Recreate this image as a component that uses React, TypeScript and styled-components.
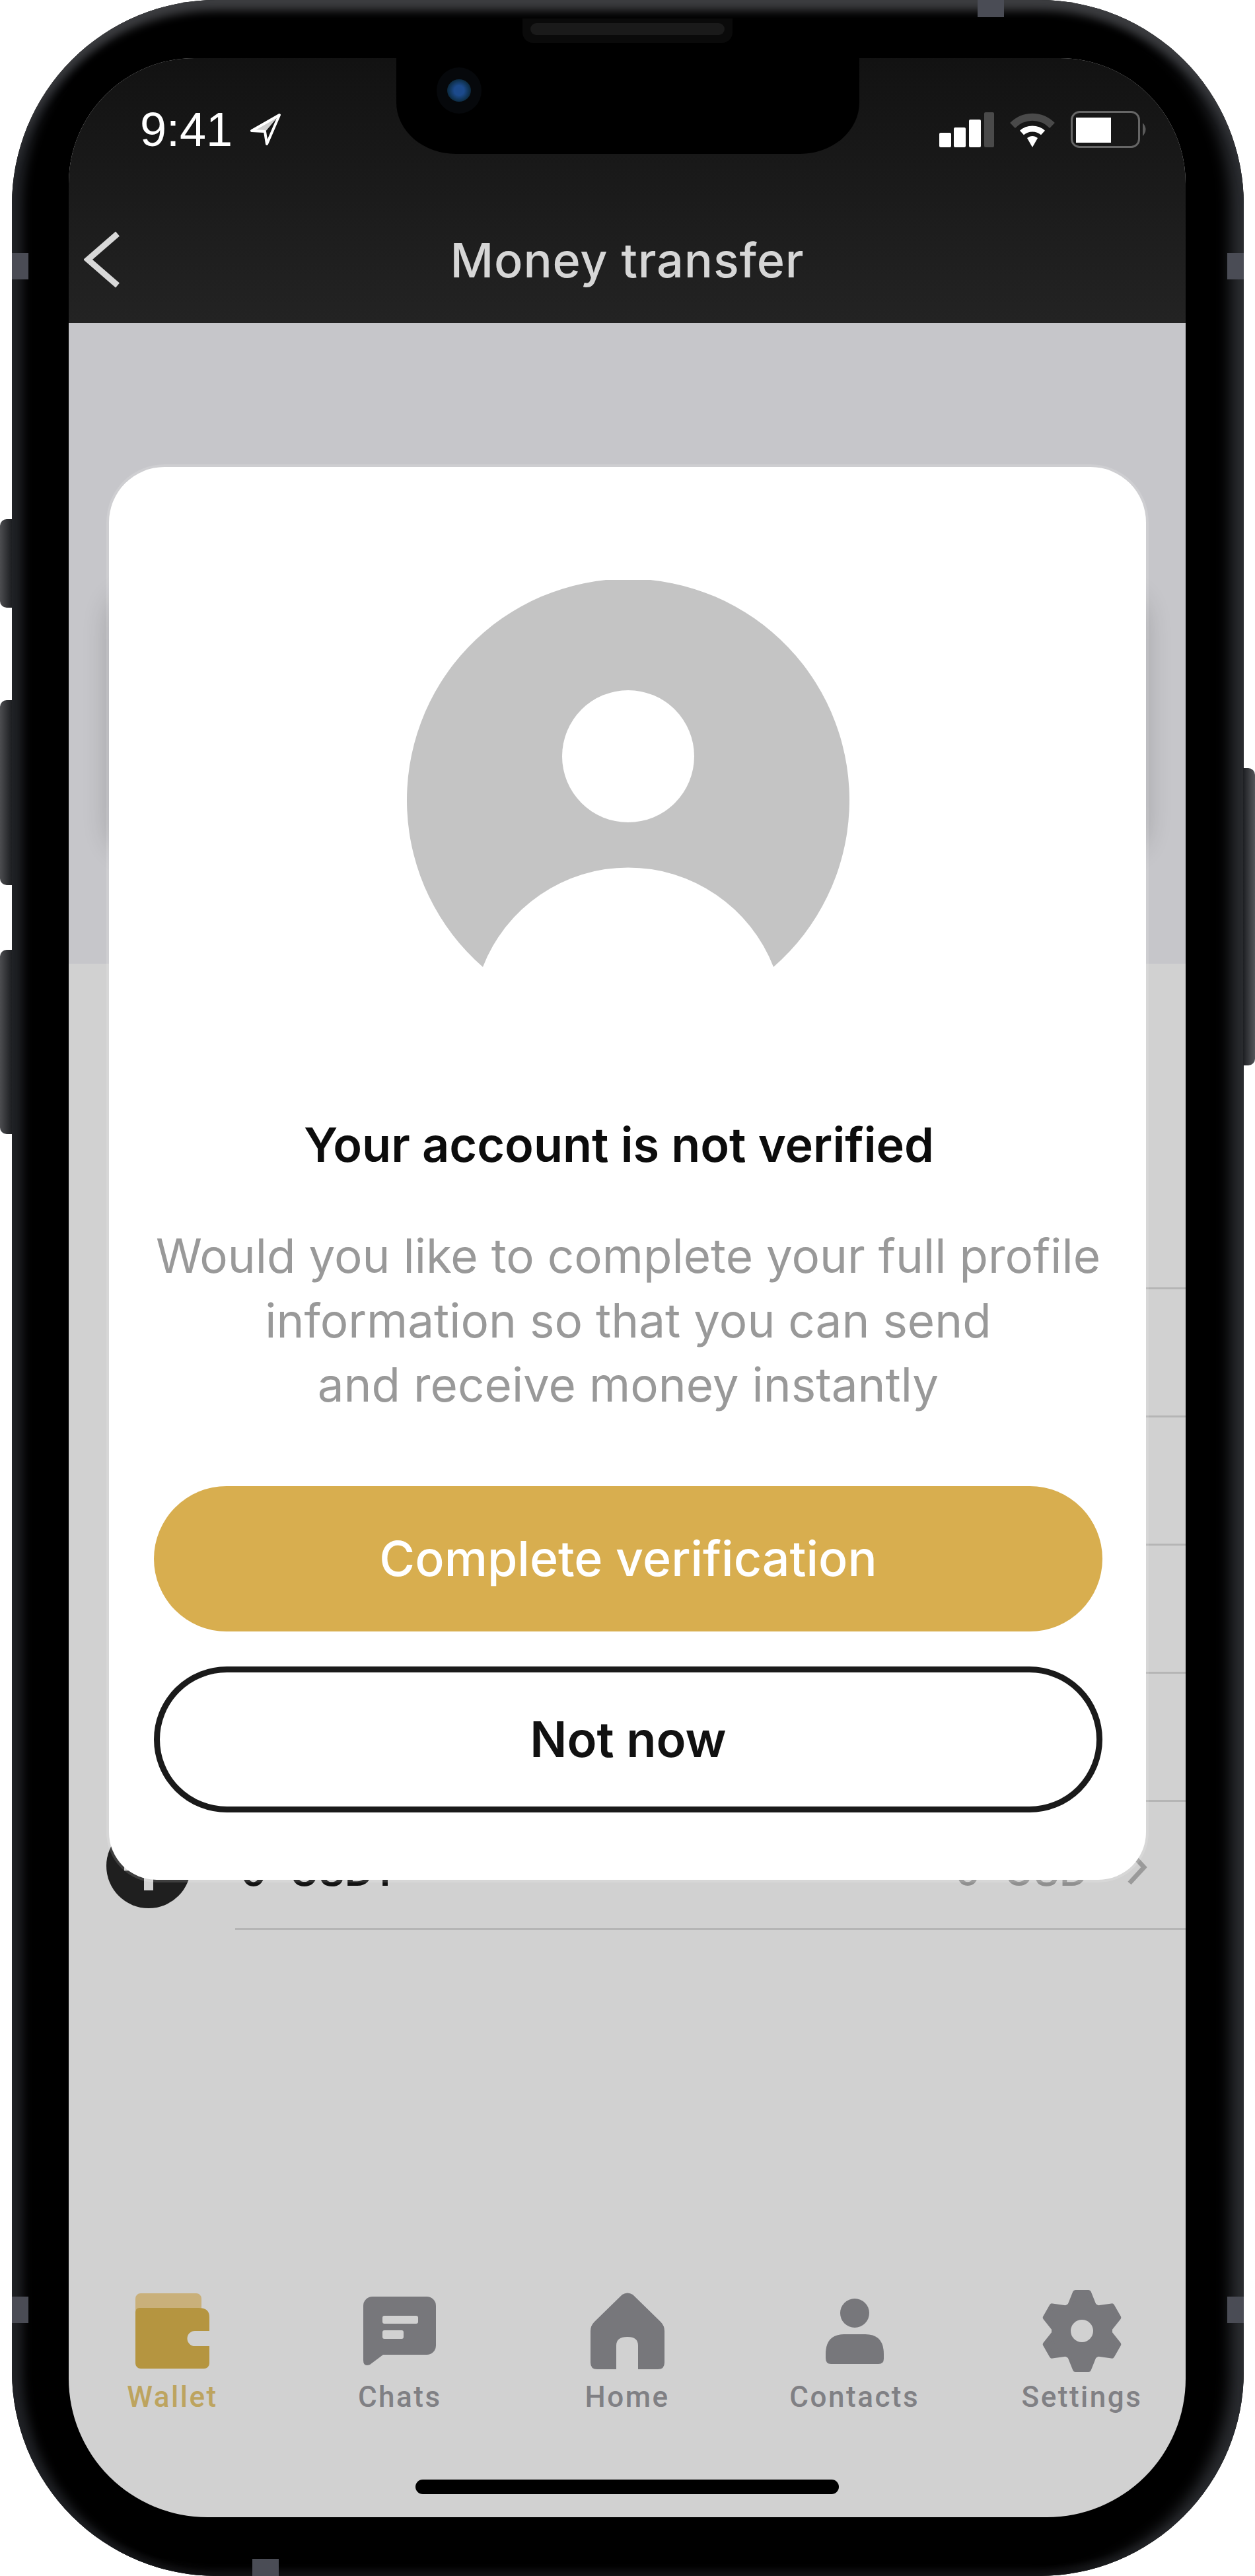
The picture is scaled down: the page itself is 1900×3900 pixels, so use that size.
import styled, { createGlobalStyle } from "styled-components";

const GlobalStyle = createGlobalStyle`
  html, body {
    margin: 0;
    padding: 0;
    background-color: #ffffff;
    font-family: "Inter", "Liberation Sans", sans-serif;
  }
  * {
    box-sizing: border-box;
  }
`;

const Page = styled.div`
  width: 1900px;
  height: 3900px;
  padding-left: 18px;
  overflow: hidden;
`;

const PhoneBody = styled.div`
  position: relative;
  width: 1865px;
  height: 3900px;
  padding: 88px 88px 89px 86px;
  border-radius: 310px;
  background-color: #000000;
  box-shadow:
    inset 0 26px 14px -10px #3c3d40,
    inset 26px 0 16px -10px #202226,
    inset -30px 0 22px -10px #2b2d31,
    inset 0 -24px 8px -12px #0c0c0d;
`;

const SideButton = styled.div<{ $top: number; $height: number; $side: "left" | "right" }>`
  position: absolute;
  top: ${(p) => p.$top}px;
  height: ${(p) => p.$height}px;
  width: 18px;
  ${(p) =>
    p.$side === "left"
      ? `left: -18px;
         border-radius: 10px 0 0 10px;
         background: linear-gradient(to right, #4c4d50, #1c1e21);`
      : `right: -17px;
         border-radius: 0 10px 10px 0;
         background: linear-gradient(to right, #1d1f23, #55565a);`}
`;

const AntennaBand = styled.div<{ $top: number; $left: number; $wide?: boolean }>`
  position: absolute;
  top: ${(p) => p.$top}px;
  left: ${(p) => p.$left}px;
  width: ${(p) => (p.$wide ? 40 : 25)}px;
  height: ${(p) => (p.$wide ? 26 : 40)}px;
  background-color: #4a4c55;
`;

const Speaker = styled.div`
  position: absolute;
  z-index: 3;
  top: 28px;
  left: 773px;
  width: 318px;
  height: 37px;
  padding: 7px 12px;
  border-radius: 0 0 16px 16px;
  background-color: #0a0a0a;
`;

const SpeakerSlot = styled.div`
  height: 18px;
  border-radius: 9px;
  background-color: #1a1a1a;
`;

const Screen = styled.div`
  position: relative;
  display: flex;
  flex-direction: column;
  width: 1691px;
  height: 3723px;
  overflow: hidden;
  border-radius: 190px 190px 210px 210px;
  background-color: #d1d1d1;
`;

const Notch = styled.div`
  position: absolute;
  z-index: 2;
  top: 0;
  left: 496px;
  width: 701px;
  height: 145px;
  border-radius: 0 0 90px 90px / 0 0 78px 78px;
  background-color: #000000;
`;

const Camera = styled.div`
  position: absolute;
  top: 14px;
  left: 61px;
  display: flex;
  align-items: center;
  justify-content: center;
  width: 68px;
  height: 70px;
  border-radius: 50%;
  background-color: #06080b;
`;

const CameraLens = styled.div`
  width: 36px;
  height: 34px;
  border-radius: 50%;
  background: radial-gradient(circle, #1c4a8c 30%, #0e2f4a 65%, #06080b 100%);
`;

const Header = styled.header`
  display: flex;
  flex-direction: column;
  flex-shrink: 0;
  height: 401px;
  padding-top: 78px;
  background: linear-gradient(to bottom, #121212, #232323);
`;

const StatusBar = styled.div`
  display: flex;
  align-items: center;
  justify-content: space-between;
  height: 60px;
  padding: 0 56px 0 108px;
`;

const StatusTime = styled.div`
  display: flex;
  align-items: center;
  gap: 26px;
  color: #ffffff;
  font-family: "Liberation Sans", sans-serif;
  font-size: 72px;
  line-height: 60px;
`;

const StatusIcons = styled.div`
  display: flex;
  align-items: center;
  gap: 23px;
`;

const NavBar = styled.div`
  display: grid;
  grid-template-columns: 1fr auto 1fr;
  align-items: center;
  height: 85px;
  margin-top: 124px;
`;

const BackButton = styled.svg`
  margin-left: 23px;
`;

const NavTitle = styled.h1`
  margin: 0;
  color: #d6d6d6;
  font-size: 72px;
  font-weight: 500;
  line-height: 85px;
  letter-spacing: 0.8px;
`;

const Hero = styled.section`
  flex-shrink: 0;
  height: 970px;
  padding: 411px 61px 0;
  background-color: #c6c6ca;
`;

const BalanceCard = styled.div`
  height: 390px;
  border-radius: 40px;
  background-color: #c6c6ca;
  box-shadow: 0 0 40px rgba(0, 0, 0, 0.2);
`;

const RowList = styled.div`
  display: flex;
  flex-direction: column;
  padding-top: 299px;
`;

const Row = styled.div`
  display: flex;
  align-items: center;
  height: 194px;
  padding-left: 57px;
`;

const CoinBadge = styled.div`
  position: relative;
  flex-shrink: 0;
  width: 128px;
  height: 128px;
  border-radius: 50%;
  background-color: #1f1f1f;

  &::before,
  &::after {
    content: "";
    position: absolute;
    background-color: #d1d1d1;
  }
  &::before {
    left: 57px;
    top: 27px;
    width: 14px;
    height: 74px;
  }
  &::after {
    left: 27px;
    top: 57px;
    width: 74px;
    height: 14px;
  }
`;

const RowBody = styled.div`
  display: flex;
  flex: 1;
  align-items: center;
  justify-content: space-between;
  align-self: stretch;
  margin-left: 67px;
  padding: 18px 58px 0 8px;
  border-bottom: 3px solid #b5b5b5;
`;

const CoinName = styled.div`
  color: #111111;
  font-size: 60px;
  font-weight: 600;
  word-spacing: 20px;
`;

const RowRight = styled.div`
  display: flex;
  align-items: center;
  gap: 58px;
`;

const CoinValue = styled.div`
  color: #8f8f8f;
  font-size: 60px;
  font-weight: 500;
  word-spacing: 20px;
`;

const RowChevron = styled.svg`
  margin-top: -12px;
  color: #9a9a9a;
`;

const Modal = styled.div`
  position: absolute;
  z-index: 1;
  top: 619px;
  left: 61px;
  display: flex;
  flex-direction: column;
  align-items: center;
  width: 1570px;
  height: 2139px;
  padding: 171px 66px 0 68px;
  border-radius: 84px 84px 72px 72px;
  background-color: #ffffff;
  box-shadow: 0 0 0 4px rgba(255, 255, 255, 0.14);
`;

const ModalTitle = styled.h2`
  margin: 229px 0 0;
  padding-right: 28px;
  color: #0c0c0c;
  font-size: 72px;
  font-weight: 600;
  line-height: 80px;
  text-align: center;
`;

const ModalText = styled.p`
  margin: 80px 0 0;
  color: #999999;
  font-size: 71px;
  font-weight: 400;
  line-height: 97.5px;
  text-align: center;
`;

const Button = styled.button<{ $outline?: boolean }>`
  flex-shrink: 0;
  width: 100%;
  height: ${(p) => (p.$outline ? 221 : 220)}px;
  margin-top: ${(p) => (p.$outline ? 53 : 104)}px;
  border: ${(p) => (p.$outline ? "9px solid #1a1a1a" : "none")};
  border-radius: 111px;
  background-color: ${(p) => (p.$outline ? "#ffffff" : "#d8ae4f")};
  color: ${(p) => (p.$outline ? "#111111" : "#ffffff")};
  font-family: inherit;
  font-size: ${(p) => (p.$outline ? 74 : 73.5)}px;
  font-weight: ${(p) => (p.$outline ? 600 : 500)};
`;

const TabBar = styled.nav`
  display: flex;
  justify-content: space-between;
  margin-top: auto;
`;

const TabItem = styled.div<{ $active?: boolean }>`
  display: flex;
  flex-direction: column;
  align-items: center;
  width: 314px;
  color: ${(p) => (p.$active ? "#bda45f" : "#808084")};
`;

const TabIconBox = styled.div`
  display: flex;
  align-items: center;
  justify-content: center;
  height: 126px;
`;

const TabLabel = styled.span`
  margin-top: 12px;
  font-family: "Roboto", sans-serif;
  font-size: 44px;
  font-weight: 500;
  line-height: 50px;
  letter-spacing: 2.5px;
`;

const HomeIndicator = styled.div`
  flex-shrink: 0;
  width: 641px;
  height: 22px;
  margin: 100px auto 35px;
  border-radius: 11px;
  background-color: #000000;
`;

function LocationIcon() {
  return (
    <svg width="48" height="50" viewBox="0 0 48 50" fill="none">
      <path d="M45 3 L3 27 L24 28 Z" fill="#cfcfcf" />
      <path d="M45 3 L3 27 L23 28 L26 47 Z" stroke="#ffffff" strokeWidth="4" strokeLinejoin="round" />
    </svg>
  );
}

function SignalIcon() {
  return (
    <svg width="83" height="53" viewBox="0 0 83 53">
      <rect x="0" y="31" width="18" height="22" rx="2" fill="#ffffff" />
      <rect x="22" y="23" width="18" height="30" rx="2" fill="#ffffff" />
      <rect x="45" y="11" width="18" height="42" rx="2" fill="#ffffff" />
      <rect x="68" y="0" width="15" height="53" rx="2" fill="#4a4a4a" />
    </svg>
  );
}

function WifiIcon() {
  return (
    <svg width="70" height="53" viewBox="0 0 70 53" fill="none">
      <path d="M5 20 C22 3 48 3 65 20" stroke="#4a4a4a" strokeWidth="11" />
      <path d="M19 31 C28 23 42 23 51 31" stroke="#ffffff" strokeWidth="9" />
      <path d="M27 39 L35 53 L43 39 C38 35 32 35 27 39 Z" fill="#ffffff" />
    </svg>
  );
}

function BatteryIcon() {
  return (
    <svg width="118" height="56" viewBox="0 0 118 56" fill="none">
      <rect x="1.5" y="1.5" width="102" height="53" rx="12" stroke="#666666" strokeWidth="3" />
      <rect x="8" y="10" width="53" height="38" fill="#ffffff" />
      <path d="M109 18 Q118 28 109 38 Z" fill="#5a5a5a" />
    </svg>
  );
}

function AvatarPlaceholder() {
  return (
    <svg width="670" height="586" viewBox="0 0 670 586" style={{ flexShrink: 0 }}>
      <path d="M115 586 A335 335 0 1 1 555 586 A236 236 0 0 0 115 586 Z" fill="#c4c4c4" />
      <circle cx="335" cy="267" r="100" fill="#ffffff" />
    </svg>
  );
}

function WalletIcon() {
  return (
    <svg width="112" height="114" viewBox="0 0 112 114">
      <path d="M0 26 V8 a8 8 0 0 1 8-8 H92 a8 8 0 0 1 8 8 V22 H6 Z" fill="#c9b07a" />
      <path
        d="M0 28 a6 6 0 0 1 6-6 H96 q16 0 16 14 V57 H90 a11.5 11.5 0 0 0 0 23 H112 V106 a8 8 0 0 1-8 8 H8 a8 8 0 0 1-8-8 Z"
        fill="#b59540"
      />
    </svg>
  );
}

function ChatIcon() {
  return (
    <svg width="110" height="105" viewBox="0 0 110 105">
      <path
        d="M14 0 H96 a14 14 0 0 1 14 14 V74 a14 14 0 0 1-14 14 H30 L10 103 Q0 107 0 96 V14 a14 14 0 0 1 14-14 Z"
        fill="#77777b"
      />
      <rect x="29" y="29" width="54" height="12" rx="3" fill="#d1d1d1" />
      <rect x="29" y="51" width="32" height="13" rx="3" fill="#d1d1d1" />
    </svg>
  );
}

function HomeIcon() {
  return (
    <svg width="112" height="116" viewBox="0 0 112 116">
      <path
        d="M48 3 Q56 -2 64 3 L106 44 Q112 50 112 58 V106 Q112 116 102 116 H72 V80 Q72 67 56 67 Q39 67 39 80 V116 H10 Q0 116 0 106 V58 Q0 50 6 44 Z"
        fill="#77777b"
      />
    </svg>
  );
}

function ContactIcon() {
  return (
    <svg width="88" height="99" viewBox="0 0 88 99">
      <circle cx="44" cy="22" r="22" fill="#77777b" />
      <path d="M0 90 V84 Q0 54 28 54 H60 Q88 54 88 84 V91 Q88 99 80 99 H8 Q0 99 0 90 Z" fill="#77777b" />
    </svg>
  );
}

function GearIcon() {
  return (
    <svg width="120" height="126" viewBox="0 0 120 126">
      <g transform="translate(60 63)">
        {[0, 60, 120, 180, 240, 300].map((angle) => (
          <polygon
            key={angle}
            points="-18,-38 18,-38 10,-58 -10,-58"
            fill="#77777b"
            stroke="#77777b"
            strokeWidth="8"
            strokeLinejoin="round"
            transform={`rotate(${angle})`}
          />
        ))}
        <circle r="46" fill="#77777b" />
        <circle r="17" fill="#d1d1d1" />
      </g>
    </svg>
  );
}

const tabs = [
  { label: "Wallet", icon: <WalletIcon />, active: true },
  { label: "Chats", icon: <ChatIcon /> },
  { label: "Home", icon: <HomeIcon /> },
  { label: "Contacts", icon: <ContactIcon /> },
  { label: "Settings", icon: <GearIcon /> },
];

export default function App() {
  return (
    <Page>
      <GlobalStyle />
      <PhoneBody>
        <SideButton $side="left" $top={786} $height={134} />
        <SideButton $side="left" $top={1060} $height={280} />
        <SideButton $side="left" $top={1438} $height={279} />
        <SideButton $side="right" $top={1163} $height={450} />
        <AntennaBand $top={383} $left={0} />
        <AntennaBand $top={383} $left={1840} />
        <AntennaBand $top={3477} $left={0} />
        <AntennaBand $top={3477} $left={1840} />
        <AntennaBand $top={0} $left={1462} $wide />
        <AntennaBand $top={3874} $left={364} $wide />
        <Speaker>
          <SpeakerSlot />
        </Speaker>

        <Screen>
          <Notch>
            <Camera>
              <CameraLens />
            </Camera>
          </Notch>

          <Header>
            <StatusBar>
              <StatusTime>
                9:41
                <LocationIcon />
              </StatusTime>
              <StatusIcons>
                <SignalIcon />
                <WifiIcon />
                <BatteryIcon />
              </StatusIcons>
            </StatusBar>
            <NavBar>
              <BackButton width="56" height="86" viewBox="0 0 56 86" fill="none">
                <path d="M51 4 L6 43 L51 82" stroke="#d8d8d8" strokeWidth="9" />
              </BackButton>
              <NavTitle>Money transfer</NavTitle>
            </NavBar>
          </Header>

          <Hero>
            <BalanceCard />
          </Hero>

          <RowList>
            <Row><RowBody /></Row>
            <Row><RowBody /></Row>
            <Row><RowBody /></Row>
            <Row><RowBody /></Row>
            <Row><RowBody /></Row>
            <Row>
              <CoinBadge />
              <RowBody>
                <CoinName>0 USDT</CoinName>
                <RowRight>
                  <CoinValue>0 USD</CoinValue>
                  <RowChevron width="32" height="56" viewBox="0 0 32 56" fill="none">
                    <path d="M5 4 L27 28 L5 52" stroke="currentColor" strokeWidth="7" />
                  </RowChevron>
                </RowRight>
              </RowBody>
            </Row>
          </RowList>

          <TabBar>
            {tabs.map((tab) => (
              <TabItem key={tab.label} $active={tab.active}>
                <TabIconBox>{tab.icon}</TabIconBox>
                <TabLabel>{tab.label}</TabLabel>
              </TabItem>
            ))}
          </TabBar>
          <HomeIndicator />

          <Modal>
            <AvatarPlaceholder />
            <ModalTitle>Your account is not verified</ModalTitle>
            <ModalText>
              Would you like to complete your full profile
              <br />
              information so that you can send
              <br />
              and receive money instantly
            </ModalText>
            <Button>Complete verification</Button>
            <Button $outline>Not now</Button>
          </Modal>
        </Screen>
      </PhoneBody>
    </Page>
  );
}
